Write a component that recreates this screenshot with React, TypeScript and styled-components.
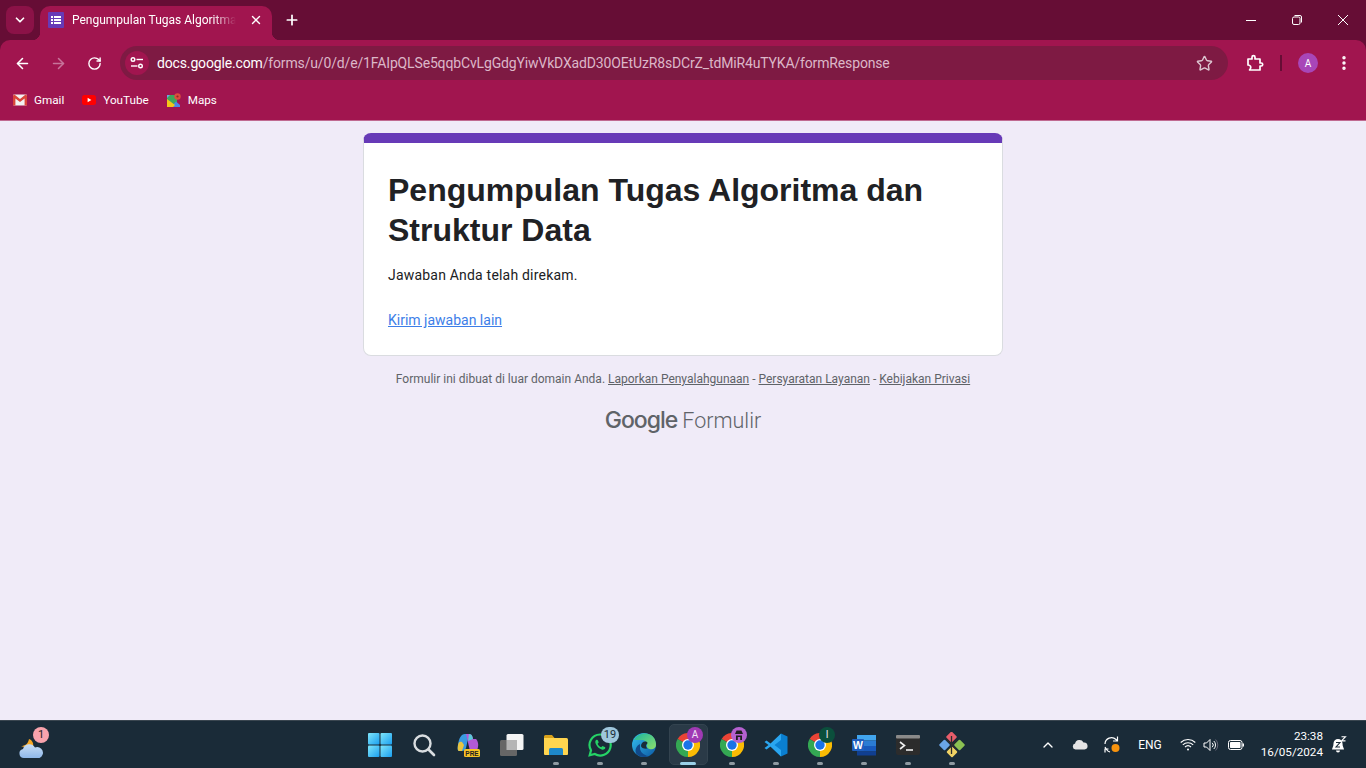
import React from "react";
import styled, { createGlobalStyle } from "styled-components";
import { ArrowLeft, ArrowRight, ChevronDown, ChevronUp, EllipsisVertical, Plus, RotateCw, Star, X } from "lucide-react";

const GlobalStyle = createGlobalStyle`
  html, body {
    margin: 0;
    height: 100%;
    overflow: hidden;
  }
  #root {
    height: 100%;
  }
  * {
    box-sizing: border-box;
  }
`;

const uiFont = `Roboto, "Noto Sans", sans-serif`;
const frame = "#660d35";
const toolbar = "#a1154f";

const Shell = styled.div`
  height: 768px;
  display: flex;
  flex-direction: column;
  font-family: ${uiFont};
  background: ${frame};
`;

/* tab strip */
const TabStrip = styled.div`
  height: 40px;
  flex: none;
  display: flex;
  align-items: flex-end;
  padding-left: 6px;
`;

const TabSearch = styled.button`
  width: 28px;
  height: 28px;
  margin-bottom: 6px;
  border: 0;
  padding: 0;
  border-radius: 8px;
  background: #8b1247;
  color: #fff;
  display: flex;
  align-items: center;
  justify-content: center;
`;

const Tab = styled.div`
  position: relative;
  margin-left: 6px;
  width: 232px;
  height: 34px;
  background: ${toolbar};
  border-radius: 10px 10px 0 0;
  display: flex;
  align-items: center;
  padding: 0 8px 6px;
  color: #fff;

  &::before,
  &::after {
    content: "";
    position: absolute;
    bottom: 0;
    width: 8px;
    height: 8px;
  }
  &::before {
    left: -8px;
    background: radial-gradient(circle at 0 0, transparent 8px, ${toolbar} 8.5px);
  }
  &::after {
    right: -8px;
    background: radial-gradient(circle at 100% 0, transparent 8px, ${toolbar} 8.5px);
  }
`;

const TabTitle = styled.span`
  margin-left: 8px;
  width: 164px;
  font-size: 12px;
  white-space: nowrap;
  overflow: hidden;
  -webkit-mask-image: linear-gradient(90deg, #000 86%, transparent 100%);
  mask-image: linear-gradient(90deg, #000 86%, transparent 100%);
`;

const TabClose = styled.span`
  margin-left: 13px;
  display: flex;
`;

const NewTab = styled.span`
  margin: 0 0 12px 12px;
  color: #fff;
  display: flex;
`;

const WindowControls = styled.div`
  margin-left: auto;
  align-self: flex-start;
  display: flex;
`;

const WindowButton = styled.span`
  width: 46px;
  height: 40px;
  display: flex;
  align-items: center;
  justify-content: center;
  color: #fff;
`;

/* toolbar */
const ToolbarRow = styled.div`
  height: 46px;
  flex: none;
  background: ${toolbar};
  border-radius: 10px 10px 0 0;
  display: flex;
  align-items: center;
  padding: 0 4px;
`;

const NavButton = styled.span<{ $dim?: boolean }>`
  width: 36px;
  height: 34px;
  display: flex;
  align-items: center;
  justify-content: center;
  color: ${(p) => (p.$dim ? "#c7749a" : "#fff")};
`;

const Omnibox = styled.div`
  margin-left: 8px;
  width: 1108px;
  height: 34px;
  border-radius: 17px;
  background: #7e1a43;
  display: flex;
  align-items: center;
  padding: 0 15px 0 5px;
`;

const SiteChip = styled.span`
  width: 24px;
  height: 24px;
  border-radius: 50%;
  background: ${toolbar};
  display: flex;
  align-items: center;
  justify-content: center;
  flex: none;
`;

const Url = styled.div`
  margin-left: 8px;
  font-size: 14px;
  letter-spacing: -0.15px;
  color: #dcb7c8;
  white-space: nowrap;
`;

const Host = styled.span`
  color: #fff;
`;

const StarSlot = styled.span`
  margin-left: auto;
  display: flex;
  color: #dcc5d0;
`;

const ToolbarEnd = styled.div`
  display: flex;
  align-items: center;
  height: 34px;
  margin-left: 18px;
`;

const Divider = styled.span`
  width: 2px;
  height: 16px;
  margin: 0 16px 0 16px;
  background: #660d35;
`;

const Avatar = styled.span`
  width: 20px;
  height: 20px;
  border-radius: 50%;
  background: #a846b8;
  color: #fff;
  font-size: 10px;
  display: flex;
  align-items: center;
  justify-content: center;
`;

const MenuSlot = styled.span`
  margin-left: 17px;
  color: #fff;
  display: flex;
`;

/* bookmarks */
const BookmarkBar = styled.div`
  height: 35px;
  flex: none;
  background: ${toolbar};
  border-bottom: 1px solid #c06a91;
  display: flex;
  align-items: center;
  padding: 0 0 6px 13px;
  gap: 18px;
`;

const Bookmark = styled.span`
  display: flex;
  align-items: center;
  gap: 7px;
  font-size: 11.7px;
  color: #fff;
`;

/* page */
const Page = styled.main`
  flex: 1;
  background: #f0ebf8;
  display: flex;
  flex-direction: column;
  align-items: center;
  padding-top: 12px;
  font-family: Roboto, Arial, sans-serif;
`;

const Card = styled.section`
  width: 640px;
  height: 223px;
  background: #fff;
  border: 1px solid #dadce0;
  border-top: 10px solid #673ab7;
  border-radius: 8px;
  padding: 27px 24px 0;
  color: #202124;
`;

const Title = styled.h1`
  margin: 0;
  font-family: "Liberation Sans", Arial, sans-serif;
  font-size: 32px;
  line-height: 40px;
  font-weight: 700;
  color: #202124;
`;

const Message = styled.p`
  margin: 15px 0 25px;
  font-size: 14px;
  line-height: 20px;
  letter-spacing: 0.2px;
`;

const AnotherLink = styled.a`
  font-size: 14px;
  line-height: 20px;
  color: #3d7ee8;
  text-decoration: underline;
`;

const Footer = styled.div`
  margin-top: 15px;
  font-size: 12px;
  line-height: 16px;
  color: #5f6368;
  a {
    color: #5f6368;
    text-decoration: underline;
  }
`;

const Brand = styled.div`
  margin-top: 18px;
  display: flex;
  align-items: baseline;
  gap: 5px;
  color: #5f6368;
  font-family: Inter, Roboto, sans-serif;
  line-height: 30px;
`;

const BrandGoogle = styled.span`
  font-size: 23px;
  font-weight: 500;
  letter-spacing: -1px;
`;

const BrandProduct = styled.span`
  font-size: 21.5px;
  font-family: Roboto, sans-serif;
  font-weight: 300;
`;

/* taskbar */
const Taskbar = styled.footer`
  height: 48px;
  flex: none;
  background: #1a2b38;
  border-top: 1px solid #3a4650;
  display: flex;
  align-items: stretch;
`;

const WidgetArea = styled.div`
  width: 358px;
  flex: none;
  padding-left: 19px;
  display: flex;
  align-items: center;
`;

const TaskItems = styled.div`
  display: flex;
`;

const TaskSlot = styled.div<{ $active?: boolean }>`
  position: relative;
  width: 44px;
  height: 47px;
  display: flex;
  align-items: center;
  justify-content: center;

  ${(p) =>
    p.$active &&
    `&::before {
      content: "";
      position: absolute;
      left: 3px;
      right: 2px;
      top: 3px;
      bottom: 3px;
      border-radius: 5px;
      background: #2a3a47;
      border: 1px solid #33434f;
    }`}

  & > svg {
    position: relative;
  }
`;

const RunDot = styled.span<{ $active?: boolean }>`
  position: absolute;
  bottom: 3px;
  left: 50%;
  transform: translateX(-50%);
  height: 3px;
  border-radius: 2px;
  width: ${(p) => (p.$active ? "16px" : "6px")};
  background: ${(p) => (p.$active ? "#9bd0e8" : "#8f9aa2")};
`;

const CountBadge = styled.span<{ $bg: string; $color?: string }>`
  position: absolute;
  top: 6px;
  right: 3px;
  min-width: 18px;
  height: 16px;
  padding: 0 2px;
  border-radius: 9px;
  background: ${(p) => p.$bg};
  color: ${(p) => p.$color ?? "#1a2b38"};
  font: 11px/16px Roboto, sans-serif;
  text-align: center;
`;

const ChromeBadge = styled.span<{ $bg: string }>`
  position: absolute;
  top: 6px;
  left: 21px;
  width: 16px;
  height: 16px;
  border-radius: 50%;
  background: ${(p) => p.$bg};
  color: #f2e6f5;
  font: 10px/16px Roboto, sans-serif;
  text-align: center;
`;

const Widget = styled.div`
  position: relative;
  width: 29px;
  height: 32px;
  display: flex;
  align-items: flex-end;
  padding-bottom: 1px;
`;

const WidgetBadge = styled.span`
  position: absolute;
  top: -2px;
  right: -1px;
  width: 16px;
  height: 16px;
  border-radius: 50%;
  background: #f8a3ad;
  color: #222;
  font: 11px/16px Roboto, sans-serif;
  text-align: center;
`;

const Tray = styled.div`
  margin-left: auto;
  display: flex;
  align-items: center;
  color: #fff;
  padding-right: 11px;
`;

const TraySlot = styled.span<{ $w: number }>`
  width: ${(p) => p.$w}px;
  display: flex;
  justify-content: center;
  align-items: center;
  position: relative;
`;

const Lang = styled.span`
  width: 44px;
  margin-right: 4px;
  text-align: center;
  font-size: 12px;
`;

const Clock = styled.div`
  width: 72px;
  margin: -2px 0 0 1px;
  text-align: right;
  font-size: 11.7px;
  line-height: 16px;
`;

/* drawings */
const FormsIcon = () => (
  <svg width="16" height="16" viewBox="0 0 16 16">
    <rect width="16" height="16" rx="1" fill="#673ab7" />
    <g fill="#fff">
      <rect x="3" y="4" width="2" height="2" />
      <rect x="6" y="4" width="7" height="2" />
      <rect x="3" y="7" width="2" height="2" />
      <rect x="6" y="7" width="7" height="2" />
      <rect x="3" y="10" width="2" height="2" />
      <rect x="6" y="10" width="7" height="2" />
    </g>
  </svg>
);

const TuneIcon = () => (
  <svg width="16" height="16" viewBox="0 0 16 16" fill="none" stroke="#fff" strokeWidth="1.4">
    <circle cx="4" cy="4.5" r="1.8" />
    <path d="M7.5 4.5H14" />
    <circle cx="11.5" cy="11" r="1.8" />
    <path d="M2 11h6.5" />
  </svg>
);

const PuzzleIcon = () => (
  <svg width="18" height="18" viewBox="0 0 18 18" fill="none" stroke="#fff" strokeWidth="1.7" strokeLinejoin="round">
    <path d="M2 5h4V3.2a1.5 1.5 0 0 1 3 0V5h5v4h1.2a1.5 1.5 0 0 1 0 3H14v4H3.6l.9-1.6c.7-1.4 0-3.4-2.500-3.400z" />
  </svg>
);

const GmailIcon = () => (
  <svg width="14" height="12" viewBox="0 0 14 12">
    <rect y="0.5" width="14" height="11" rx="1" fill="#f2f2f2" />
    <path d="M0 1.5V11.5h2.4V4.6L7 8l4.6-3.4v6.9H14V1.5L12.6.5 7 5 1.4.5z" fill="#d9453a" />
  </svg>
);

const YouTubeIcon = () => (
  <svg width="14" height="10" viewBox="0 0 14 10">
    <rect width="14" height="10" rx="2.5" fill="#f00" />
    <path d="M5.6 2.8v4.4L9.4 5z" fill="#fff" />
  </svg>
);

const MapsIcon = () => (
  <svg width="14" height="14" viewBox="0 0 14 14">
    <path d="M0 2h10v10L0 14z" fill="#3fa75a" />
    <path d="M4 14 9 8.500 13 12v2z" fill="#4a86e8" />
    <path d="M0 6l8 6-2 2H0z" fill="#f5c518" />
    <path d="M0 2h3L0 5z" fill="#6aa5e8" />
    <circle cx="10.500" cy="3.500" r="3.200" fill="#dc4d3f" />
    <circle cx="10.500" cy="3.500" r="1.100" fill="#8f2b22" />
  </svg>
);

const StartIcon = () => (
  <svg width="24" height="24" viewBox="0 0 24 24">
    <defs>
      <linearGradient id="win" x1="0" y1="0" x2="1" y2="1">
        <stop offset="0" stopColor="#7fe6fb" />
        <stop offset="1" stopColor="#1a9ff0" />
      </linearGradient>
    </defs>
    <g fill="url(#win)">
      <rect width="11.5" height="11.5" rx="1" />
      <rect x="12.5" width="11.5" height="11.5" rx="1" />
      <rect y="12.5" width="11.5" height="11.5" rx="1" />
      <rect x="12.5" y="12.5" width="11.5" height="11.5" rx="1" />
    </g>
  </svg>
);

const SearchIcon = () => (
  <svg width="24" height="24" viewBox="0 0 24 24" fill="none">
    <circle cx="10.5" cy="10.5" r="8" stroke="#d9dde0" strokeWidth="2.4" />
    <path d="M16.5 16.5 22 22" stroke="#d9dde0" strokeWidth="2.6" strokeLinecap="round" />
  </svg>
);

const CopilotIcon = () => (
  <svg width="24" height="26" viewBox="0 0 24 26">
    <path d="M2 13C3 6 5 2 9 2h4l-3 14c-.5 2-2 3-4 3H3C1.500 19 1.500 16 2 13z" fill="#3a9ae0" />
    <path d="M2 13C2.500 10 4 9 6 10l2 3-2 6H3C1.500 19 1.600 16 2 13z" fill="#e8c540" />
    <path d="M10 2h3c2 0 3 1 3.500 3l.5 2h3c2 2 3 6 1.500 10-.5 1.500-2 2-3.500 2h-4z" fill="#b25ad6" />
    <path d="M13 2c2 0 3 1 3.500 3l.5 2-5 2z" fill="#5cc8d8" />
    <rect x="8" y="17" width="16" height="8" rx="1.500" fill="#f7c325" />
    <text x="16" y="23.500" textAnchor="middle" fontFamily="Liberation Sans" fontWeight="700" fontSize="6.500" fill="#222">PRE</text>
  </svg>
);

const TaskViewIcon = () => (
  <svg width="24" height="24" viewBox="0 0 24 24">
    <rect x="6.500" y="1" width="17" height="16" rx="1.500" fill="#f4f4f4" />
    <rect x="0" y="7" width="17" height="16" rx="1.500" fill="#666" />
    <rect x="6.500" y="7" width="10.500" height="10" fill="#b5b5b5" />
  </svg>
);

const FolderIcon = () => (
  <svg width="24" height="24" viewBox="0 0 24 24">
    <path d="M0 3.500A1.500 1.500 0 0 1 1.500 2h6.500l2.500 3H0z" fill="#d9a21b" />
    <path d="M0 5h22.500A1.500 1.500 0 0 1 24 6.500V21a1 1 0 0 1-1 1H1a1 1 0 0 1-1-1z" fill="#ffd54f" />
    <path d="M5 16.500A1.500 1.500 0 0 1 6.500 15h11a1.500 1.500 0 0 1 1.500 1.500V22H5z" fill="#1e88c9" />
  </svg>
);

const WhatsAppIcon = () => (
  <svg width="24" height="24" viewBox="0 0 24 24" fill="none">
    <path d="M12 1.500A10.500 10.500 0 0 0 3 17.300L1.700 22.300l5.100-1.300A10.500 10.500 0 1 0 12 1.500z" stroke="#25d366" strokeWidth="2.200" />
    <path d="M8.500 6.800c-1 .6-1.500 1.800-1 3.400 1 3 3.400 5.300 6.200 6.300 1.600.5 2.800 0 3.400-1 .4-.7.200-1.100-.3-1.400l-1.800-.9c-.5-.2-.8 0-1.100.4l-.6.700c-1.600-.6-3-2-3.700-3.600l.7-.6c.4-.4.500-.7.300-1.100l-.8-1.800c-.3-.6-.7-.7-1.300-.4z" fill="#25d366" />
  </svg>
);

const EdgeIcon = () => (
  <svg width="24" height="24" viewBox="0 0 24 24">
    <defs>
      <linearGradient id="edgeA" x1="0" y1="0" x2="1" y2="1">
        <stop offset="0" stopColor="#35c1f1" />
        <stop offset="1" stopColor="#0c59a4" />
      </linearGradient>
      <linearGradient id="edgeB" x1="0" y1="0" x2="1" y2="1">
        <stop offset="0" stopColor="#1bb6a0" />
        <stop offset="1" stopColor="#8ee06a" />
      </linearGradient>
    </defs>
    <circle cx="12" cy="12" r="12" fill="url(#edgeA)" />
    <path d="M2 7C5 1 12-1 18 1.500c4 2 6 6 6 10.500 0 3-3 5-6.500 4-2-.5-3-2-2.500-4 .5-3-2-5-5.500-5C6 7 3.500 7 2 7z" fill="url(#edgeB)" />
    <path d="M8 15c0 4 4 7.500 8.500 8 -3 1.500-9 1.500-12-2-2-2.500-1-8 3.500-10 0 1 0 2.500 0 4z" fill="#114a8b" />
    <path d="M9 13c0-3 2.500-5 5-4.500 1.500.3 2 1.500 1 2.500-1.500.5-1.500 3 .5 4.500-3 .5-6.500-.5-6.500-2.500z" fill="#1a2b38" />
  </svg>
);

const ChromeIcon = () => (
  <svg width="24" height="24" viewBox="0 0 24 24">
    <path d="M12 12 1.600 6A12 12 0 0 1 22.400 6z" fill="#ea4335" />
    <path d="M12 12 22.400 6A12 12 0 0 1 12 24z" fill="#fbbc04" />
    <path d="M12 12V24A12 12 0 0 1 1.600 6z" fill="#34a853" />
    <circle cx="12" cy="12" r="6" fill="#fff" />
    <circle cx="12" cy="12" r="4.700" fill="#1a73e8" />
  </svg>
);

const VSCodeIcon = () => (
  <svg width="24" height="24" viewBox="0 0 24 24">
    <path d="M17 0.500 23.500 3.500v17L17 23.500 6 13l11-8.500z" fill="#0a7fd0" />
    <path d="M17 0.500 6.500 10.500 2.500 7.500.5 9l4 3-4 3 2 1.500 4-3L17 23.500v-6.500L10.500 12 17 7z" fill="#2aa6f0" />
  </svg>
);

const WordIcon = () => (
  <svg width="24" height="24" viewBox="0 0 24 24">
    <rect x="5" y="2" width="19" height="5.500" fill="#41a5ee" />
    <rect x="5" y="7.500" width="19" height="5.500" fill="#2b7cd3" />
    <rect x="5" y="13" width="19" height="5.500" fill="#185abd" />
    <rect x="5" y="18.500" width="19" height="4" fill="#103f91" />
    <rect x="0" y="6" width="12" height="12" rx="1" fill="#1f5fbf" />
    <text x="6" y="15.700" textAnchor="middle" fontFamily="Liberation Sans" fontWeight="700" fontSize="10.500" fill="#fff">W</text>
  </svg>
);

const TerminalIcon = () => (
  <svg width="24" height="24" viewBox="0 0 24 24" fill="none">
    <rect y="2" width="24" height="20" rx="2" fill="#2c2c2c" />
    <rect y="2" width="24" height="3.500" rx="1" fill="#8a8a8a" />
    <path d="M4 9l4.500 3.500L4 16" stroke="#eee" strokeWidth="1.600" />
    <path d="M10 17h7" stroke="#eee" strokeWidth="1.600" />
  </svg>
);

const GitIcon = () => (
  <svg width="26" height="26" viewBox="0 0 26 26">
    <rect x="8.500" y="1" width="8" height="8" rx="1" transform="rotate(45 12.500 5)" fill="#e85d6a" />
    <rect x="1.500" y="9" width="8" height="8" rx="1" transform="rotate(45 5.500 13)" fill="#6aa5e8" />
    <rect x="16.500" y="9" width="8" height="8" rx="1" transform="rotate(45 20.500 13)" fill="#8cc152" />
    <rect x="9" y="16" width="8" height="8" rx="1" transform="rotate(45 13 20)" fill="#f0d264" />
    <path d="M12.500 4v18M8 8l9 9M13 13l5-5" stroke="#2c2c2c" strokeWidth="1.300" />
  </svg>
);

const WeatherIcon = () => (
  <svg width="26" height="24" viewBox="0 0 26 24">
    <path d="M2 10c4 0 7-2 8-7 3 1 5 4 4 8H5z" fill="#f5a623" />
    <defs>
      <linearGradient id="cloud" x1="0" y1="0" x2="0" y2="1">
        <stop offset="0" stopColor="#c9def5" />
        <stop offset="1" stopColor="#8fb8ea" />
      </linearGradient>
    </defs>
    <path d="M5 22a4.500 4.500 0 0 1-1-8.900A6.500 6.500 0 0 1 16 11.500 5.300 5.300 0 0 1 20.500 22z" fill="url(#cloud)" />
  </svg>
);

const CloudIcon = () => (
  <svg width="16" height="11" viewBox="0 0 16 11">
    <path d="M3.500 10.500a3 3 0 0 1-.4-5.900A4.500 4.500 0 0 1 11.500 3.500a3.500 3.500 0 0 1 1 7z" fill="#e4e4e4" />
  </svg>
);

const SyncIcon = () => (
  <svg width="18" height="20" viewBox="0 0 18 20" fill="none">
    <path d="M2 9a6.500 6.500 0 0 1 11-4.500l1.500 1.500M14.500 1.500V6H10" stroke="#fff" strokeWidth="1.200" />
    <path d="M2 12l1.500 2.500A6 6 0 0 0 7 17M2 17.500V14h3.500" stroke="#fff" strokeWidth="1.200" />
    <circle cx="12.500" cy="13" r="4" fill="#f7930e" />
  </svg>
);

const WifiIcon = () => (
  <svg width="16" height="14" viewBox="0 0 16 14" fill="none" stroke="#fff" strokeWidth="1.100">
    <path d="M.7 4.500a10.500 10.500 0 0 1 14.600 0" />
    <path d="M2.800 6.800a7.500 7.500 0 0 1 10.400 0" />
    <path d="M5 9a4.400 4.400 0 0 1 6 0" />
    <circle cx="8" cy="11.500" r="1" fill="#fff" stroke="none" />
  </svg>
);

const VolumeIcon = () => (
  <svg width="16" height="14" viewBox="0 0 16 14" fill="none" stroke="#fff" strokeWidth="1">
    <path d="M1 5h2.500L7 1.500v11L3.500 9H1z" />
    <path d="M9.200 4.800a3 3 0 0 1 0 4.400M10.800 3a5.500 5.500 0 0 1 0 8" />
    <path d="M12.600 1.500a8 8 0 0 1 0 11" stroke="#667" />
  </svg>
);

const BatteryIcon = () => (
  <svg width="16" height="10" viewBox="0 0 16 10" fill="none">
    <rect x=".5" y=".5" width="13.500" height="9" rx="2" stroke="#fff" />
    <rect x="2" y="2" width="10.500" height="6" rx=".7" fill="#fff" />
    <rect x="14.500" y="3.500" width="1.500" height="3" fill="#fff" />
  </svg>
);

const BellIcon = () => (
  <svg width="16" height="18" viewBox="0 0 16 18">
    <path d="M7 3A4.500 4.500 0 0 0 2.500 7.500c0 3.500-1.500 4.500-1.500 6h12c0-1.500-1.500-2.500-1.500-6A4.500 4.500 0 0 0 7 3z" fill="#fff" />
    <path d="M5 14.500h4a2 2 0 0 1-4 0z" fill="#fff" />
    <path d="M10.500 .7h4l-4 4.200h4" fill="none" stroke="#fff" strokeWidth="1.100" />
    <path d="M5 6.500h4l-4 4.500h4" fill="none" stroke="#1a2b38" strokeWidth="1.100" />
  </svg>
);

const IncognitoGlyph = () => (
  <svg width="16" height="16" viewBox="0 0 16 16" fill="#1f1f1f">
    <path d="M4 7 5.500 3.500h5L12 7z" />
    <path d="M5 9.500h1.800V13H5zM9.200 9.500H11V13H9.200zM5 8.500h6v1.500H5z" />
  </svg>
);

const apps = [
  { key: "start", icon: <StartIcon /> },
  { key: "search", icon: <SearchIcon /> },
  { key: "copilot", icon: <CopilotIcon /> },
  { key: "taskview", icon: <TaskViewIcon /> },
  { key: "files", icon: <FolderIcon />, running: true },
  { key: "whatsapp", icon: <WhatsAppIcon />, running: true, count: "19" },
  { key: "edge", icon: <EdgeIcon />, running: true },
  { key: "chrome-a", icon: <ChromeIcon />, running: true, active: true, badge: "#a03ab4", letter: "A" },
  { key: "chrome-b", icon: <ChromeIcon />, running: true, badge: "#b561d0", glyph: true },
  { key: "vscode", icon: <VSCodeIcon />, running: true },
  { key: "chrome-i", icon: <ChromeIcon />, running: true, badge: "#0b4f3c", letter: "I" },
  { key: "word", icon: <WordIcon />, running: true },
  { key: "terminal", icon: <TerminalIcon />, running: true },
  { key: "git", icon: <GitIcon />, running: true },
];

const App = () => {
  return (
    <>
      <GlobalStyle />
      <Shell>
        <TabStrip>
          <TabSearch>
            <ChevronDown size={14} strokeWidth={3} />
          </TabSearch>
          <Tab>
            <FormsIcon />
            <TabTitle>Pengumpulan Tugas Algoritma</TabTitle>
            <TabClose>
              <X size={14} strokeWidth={2.4} />
            </TabClose>
          </Tab>
          <NewTab>
            <Plus size={16} strokeWidth={2.6} />
          </NewTab>
          <WindowControls>
            <WindowButton>
              <svg width="10" height="10" viewBox="0 0 10 10">
                <path d="M0 5.500h10" stroke="#fff" />
              </svg>
            </WindowButton>
            <WindowButton>
              <svg width="10" height="10" viewBox="0 0 10 10" fill="none" stroke="#fff">
                <rect x=".5" y="2" width="7.500" height="7.500" rx="1.500" />
                <path d="M2.500.5h5.500A1.500 1.500 0 0 1 9.500 2v5.500" />
              </svg>
            </WindowButton>
            <WindowButton>
              <svg width="10" height="10" viewBox="0 0 10 10">
                <path d="M0 0l10 10M10 0 0 10" stroke="#fff" />
              </svg>
            </WindowButton>
          </WindowControls>
        </TabStrip>

        <ToolbarRow>
          <NavButton>
            <ArrowLeft size={17} strokeWidth={2.2} />
          </NavButton>
          <NavButton $dim>
            <ArrowRight size={17} strokeWidth={2.2} />
          </NavButton>
          <NavButton>
            <RotateCw size={15} strokeWidth={2.2} />
          </NavButton>
          <Omnibox>
            <SiteChip>
              <TuneIcon />
            </SiteChip>
            <Url>
              <Host>docs.google.com</Host>/forms/u/0/d/e/1FAIpQLSe5qqbCvLgGdgYiwVkDXadD30OEtUzR8sDCrZ_tdMiR4uTYKA/formResponse
            </Url>
            <StarSlot>
              <Star size={17} strokeWidth={2} />
            </StarSlot>
          </Omnibox>
          <ToolbarEnd>
            <PuzzleIcon />
            <Divider />
            <Avatar>A</Avatar>
            <MenuSlot>
              <EllipsisVertical size={18} strokeWidth={2.6} />
            </MenuSlot>
          </ToolbarEnd>
        </ToolbarRow>

        <BookmarkBar>
          <Bookmark>
            <GmailIcon />
            Gmail
          </Bookmark>
          <Bookmark>
            <YouTubeIcon />
            YouTube
          </Bookmark>
          <Bookmark>
            <MapsIcon />
            Maps
          </Bookmark>
        </BookmarkBar>

        <Page>
          <Card>
            <Title>Pengumpulan Tugas Algoritma dan Struktur Data</Title>
            <Message>Jawaban Anda telah direkam.</Message>
            <AnotherLink href="#">Kirim jawaban lain</AnotherLink>
          </Card>
          <Footer>
            Formulir ini dibuat di luar domain Anda. <a href="#">Laporkan Penyalahgunaan</a> -{" "}
            <a href="#">Persyaratan Layanan</a> - <a href="#">Kebijakan Privasi</a>
          </Footer>
          <Brand>
            <BrandGoogle>Google</BrandGoogle>
            <BrandProduct>Formulir</BrandProduct>
          </Brand>
        </Page>

        <Taskbar>
          <WidgetArea>
            <Widget>
              <WeatherIcon />
              <WidgetBadge>1</WidgetBadge>
            </Widget>
          </WidgetArea>
          <TaskItems>
            {apps.map((app) => (
              <TaskSlot key={app.key} $active={app.active}>
                {app.icon}
                {app.count && <CountBadge $bg="#9ec6dc">{app.count}</CountBadge>}
                {app.badge && (
                  <ChromeBadge $bg={app.badge}>{app.glyph ? <IncognitoGlyph /> : app.letter}</ChromeBadge>
                )}
                {app.running && <RunDot $active={app.active} />}
              </TaskSlot>
            ))}
          </TaskItems>
          <Tray>
            <TraySlot $w={32}>
              <ChevronUp size={16} strokeWidth={2} />
            </TraySlot>
            <TraySlot $w={32}>
              <CloudIcon />
            </TraySlot>
            <TraySlot $w={32}>
              <SyncIcon />
            </TraySlot>
            <Lang>ENG</Lang>
            <TraySlot $w={24}>
              <WifiIcon />
            </TraySlot>
            <TraySlot $w={22}>
              <VolumeIcon />
            </TraySlot>
            <TraySlot $w={28}>
              <BatteryIcon />
            </TraySlot>
            <Clock>
              23:38
              <br />
              16/05/2024
            </Clock>
            <TraySlot $w={32}>
              <BellIcon />
            </TraySlot>
          </Tray>
        </Taskbar>
      </Shell>
    </>
  );
};

export default App;
